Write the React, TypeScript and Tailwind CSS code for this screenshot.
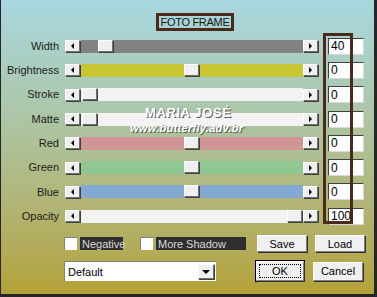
const font = "font-['Liberation_Sans',Arial,sans-serif]";

type Row = { label: string; track: string; thumb: number; value: string };

const rows: Row[] = [
  { label: "Width", track: "bg-[#828282]", thumb: 17, value: "40" },
  { label: "Brightness", track: "bg-[#c9c634]", thumb: 103, value: "0" },
  { label: "Stroke", track: "bg-[#f3f3f3]", thumb: 1, value: "0" },
  { label: "Matte", track: "bg-[#f3f3f3]", thumb: 1, value: "0" },
  { label: "Red", track: "bg-[#d19596]", thumb: 103, value: "0" },
  { label: "Green", track: "bg-[#8fc792]", thumb: 103, value: "0" },
  { label: "Blue", track: "bg-[#81a9d2]", thumb: 103, value: "0" },
  { label: "Opacity", track: "bg-[#f3f3f3]", thumb: 206, value: "100" },
];

function Raised({ className, children }: { className: string; children?: React.ReactNode }) {
  return (
    <div
      className={
        "flex items-center justify-center border border-t-white border-l-white border-r-[#707070] border-b-[#707070] bg-[#efefef] shadow-[1px_1px_0_#404040] " +
        className
      }
    >
      {children}
    </div>
  );
}

function Arrow({ dir }: { dir: "left" | "right" | "down" }) {
  if (dir === "left")
    return <span className="block h-0 w-0 border-y-[3px] border-r-[3px] border-y-transparent border-r-black" />;
  if (dir === "right")
    return <span className="block h-0 w-0 border-y-[3px] border-l-[3px] border-y-transparent border-l-black" />;
  return <span className="block h-0 w-0 border-x-[4px] border-t-[4px] border-x-transparent border-t-black" />;
}

function SliderRow({ row }: { row: Row }) {
  return (
    <div className="flex h-[24.3px] items-center">
      <div className="w-[58px] text-right text-[11px] text-[#1c1c1c]">{row.label}</div>
      <div className="ml-[6px] flex h-[13px] w-[254px] items-center">
        <Raised className="h-[12px] w-[15px]">
          <Arrow dir="left" />
        </Raised>
        <div className={"relative ml-[1px] h-[13px] w-[222px] " + row.track}>
          <div className="absolute top-0 h-[13px] w-[16px]" style={{ left: row.thumb }}>
            <Raised className="h-[12px] w-[15px]" />
          </div>
        </div>
        <Raised className="h-[12px] w-[15px]">
          <Arrow dir="right" />
        </Raised>
      </div>
      <div className="ml-[9px] flex h-[17px] w-[36px] items-center border-t border-l border-t-[#404040] border-l-[#404040] border-r border-b border-r-[#d8d8d8] border-b-[#d8d8d8] bg-white pl-[2px] text-[12px] leading-none text-black">
        {row.value}
      </div>
    </div>
  );
}

function Check({ label, width }: { label: string; width: string }) {
  return (
    <div className="flex items-center">
      <div className="h-[13px] w-[13px] border-t border-l border-t-[#808080] border-l-[#808080] bg-white" />
      <div className={"ml-[3px] flex h-[13px] items-center bg-[#2f2f2f] px-[2px] text-[11px] text-[#d9d9d9] " + width}>
        {label}
      </div>
    </div>
  );
}

function Button({ label, className }: { label: string; className: string }) {
  return (
    <div
      className={
        "flex items-center justify-center border border-t-white border-l-white border-r-[#808080] border-b-[#808080] bg-[#f0f0f0] text-[11px] text-black shadow-[1px_1px_0_#303030] " +
        className
      }
    >
      {label}
    </div>
  );
}

export default function App() {
  return (
    <div
      className={
        "relative h-[297px] w-[377px] overflow-hidden border-l border-r-[3px] border-b-[3px] border-[#262626] bg-linear-to-b from-[#a8d7e0] via-[#adc39d] via-45% to-[#b4a236] " +
        font
      }
    >
      <div className="ml-[155px] mt-[13px] flex h-[18px] w-[78px] items-center justify-center border-[3px] border-[#4b2a1c] text-[11px] tracking-[-0.3px] text-[#161616]">
        FOTO FRAME
      </div>

      <div className="mt-[3px]">
        {rows.map((r) => (
          <SliderRow key={r.label} row={r} />
        ))}
      </div>

      <div className="mt-[7px] flex h-[17px] items-center">
        <div className="ml-[63px]">
          <Check label="Negative" width="w-[43px]" />
        </div>
        <div className="ml-[17px]">
          <Check label="More Shadow" width="w-[90px]" />
        </div>
        <Button label="Save" className="ml-[11px] h-[17px] w-[50px]" />
        <Button label="Load" className="ml-[8px] h-[17px] w-[50px]" />
      </div>

      <div className="mt-[8px] flex items-center">
        <div className="ml-[63px] flex h-[20px] w-[152px] items-center justify-between border-t border-l border-t-[#808080] border-l-[#808080] bg-white pl-[3px] pr-[2px] text-[11px] text-black">
          <span>Default</span>
          <Raised className="h-[15px] w-[16px]">
            <Arrow dir="down" />
          </Raised>
        </div>
        <div className="ml-[39px] border border-black">
          <Button label="OK" className="h-[20px] w-[48px] outline-1 outline-dotted outline-black -outline-offset-4" />
        </div>
        <Button label="Cancel" className="ml-[8px] h-[19px] w-[50px]" />
      </div>

      <div className="pointer-events-none absolute left-[322px] top-[33px] h-[191px] w-[30px] border-[3px] border-[#4b2a1c]" />

      <div className="pointer-events-none absolute left-[144px] top-[106px] text-[13px] font-bold leading-none tracking-[0.6px] text-white [text-shadow:1px_1px_0_#5a5a5a]">
        MARIA JOSÉ
      </div>
      <div className="pointer-events-none absolute left-[129px] top-[123px] text-[11px] font-bold italic leading-none tracking-[0.3px] text-white [text-shadow:1px_1px_0_#5a5a5a]">
        www.butterfly.adv.br
      </div>
    </div>
  );
}
